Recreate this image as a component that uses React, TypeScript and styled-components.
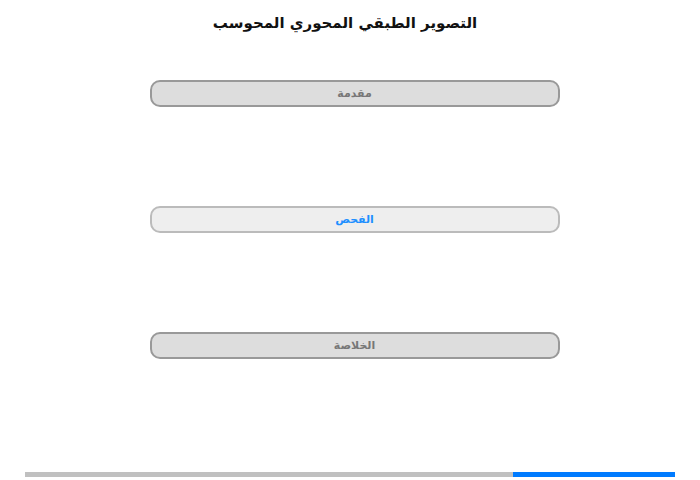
import React from "react";
import styled, { createGlobalStyle } from "styled-components";

const GlobalStyle = createGlobalStyle`
  html, body {
    margin: 0;
    padding: 0;
    background: #fff;
    font-family: "DejaVu Sans", "Liberation Sans", Arial, sans-serif;
  }
`;

type Section = { label: string; active?: boolean };

const sections: Section[] = [
  { label: "مقدمة" },
  { label: "الفحص", active: true },
  { label: "الخلاصة" },
];

const App = () => {
  const progress = 25;

  return (
    <>
      <GlobalStyle />
      <Page dir="rtl">
        <Title>التصوير الطبقي المحوري المحوسب</Title>
        <SectionList>
          {sections.map(({ label, active }) => (
            <SectionButton key={label} $active={active}>
              {label}
            </SectionButton>
          ))}
        </SectionList>
        <ProgressTrack dir="ltr">
          <ProgressFill style={{ width: `${progress}%` }} />
        </ProgressTrack>
      </Page>
    </>
  );
};

export default App;

const Page = styled.div`
  display: flex;
  flex-direction: column;
  align-items: center;
  width: 700px;
  height: 480px;
  box-sizing: border-box;
  padding-top: 13px;
`;

const Title = styled.h1`
  margin: 0 0 0 -10px;
  font-size: 15px;
  font-weight: bold;
  color: #111;
  line-height: 20px;
`;

const SectionList = styled.div`
  display: flex;
  flex-direction: column;
  gap: 99px;
  margin: 47px 0 0 9px;
`;

const SectionButton = styled.div<{ $active?: boolean }>`
  width: 410px;
  height: 27px;
  box-sizing: border-box;
  display: flex;
  align-items: center;
  justify-content: center;
  border-radius: 10px;
  border: 2px solid ${({ $active }) => ($active ? "#bbb" : "#999")};
  background: ${({ $active }) => ($active ? "#eee" : "#ddd")};
  color: ${({ $active }) => ($active ? "#1e90ff" : "#777")};
  font-size: 11px;
  font-weight: bold;
`;

const ProgressTrack = styled.div`
  margin-top: auto;
  margin-bottom: 3px;
  width: 650px;
  height: 5px;
  background: #c0c0c0;
  display: flex;
  justify-content: flex-end;
`;

const ProgressFill = styled.div`
  height: 100%;
  background: #007bff;
`;
